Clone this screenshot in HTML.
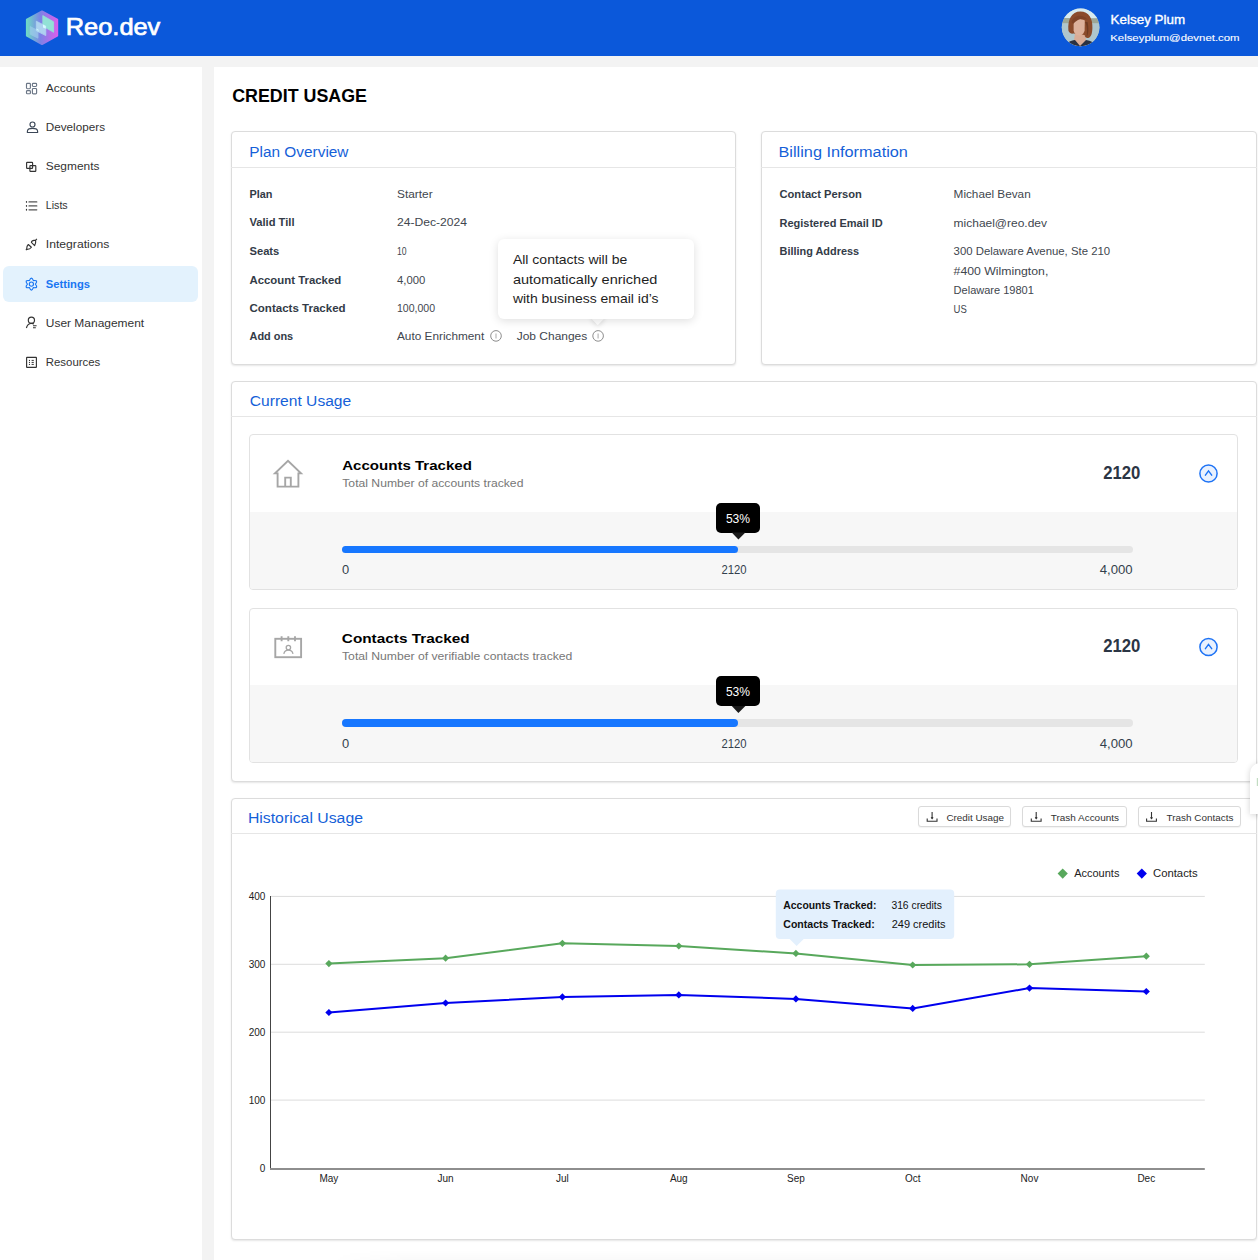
<!DOCTYPE html>
<html><head><meta charset="utf-8">
<style>
*{box-sizing:border-box;margin:0;padding:0}
html,body{width:1258px;height:1260px;overflow:hidden;background:#F3F3F3;font-family:"Liberation Sans",sans-serif}
.abs{position:absolute}
#hdr{left:0;top:0;width:1258px;height:56px;background:#0B58DA}
#side{left:0;top:66.5px;width:202px;height:1200px;background:#fff}
#main{left:213.5px;top:66.5px;width:1045px;height:1200px;background:#fff}
#sel{left:3px;top:266px;width:195px;height:35.5px;background:#E3F2FD;border-radius:6px}
.card{background:#fff;border-radius:4px;border:1px solid #DCDCDC;box-shadow:0 1px 2px rgba(0,0,0,.10)}
.sep{height:1px;background:#E6E6E6}
.inner{background:#fff;border:1px solid #E2E2E2;border-radius:4px;overflow:hidden}
.gray{background:#F7F7F7}
svg text{font-family:"Liberation Sans",sans-serif}
</style></head><body>
<div id="hdr" class="abs"></div>
<div id="side" class="abs"></div>
<div id="main" class="abs"></div>
<div id="sel" class="abs"></div>

<!-- Plan Overview -->
<div class="abs card" style="left:231px;top:131px;width:504.5px;height:233.5px"></div>
<div class="abs sep" style="left:231px;top:166.5px;width:504.5px"></div>
<!-- Billing -->
<div class="abs card" style="left:761px;top:131px;width:495.5px;height:233.5px"></div>
<div class="abs sep" style="left:761px;top:166.5px;width:495.5px"></div>
<!-- Current Usage -->
<div class="abs card" style="left:231px;top:381px;width:1025.5px;height:401px"></div>
<div class="abs sep" style="left:231px;top:416.2px;width:1025.5px"></div>
<div class="abs inner" style="left:249px;top:434px;width:989px;height:156px"><div class="abs gray" style="left:0;top:77px;width:100%;height:80px"></div></div>
<div class="abs inner" style="left:249px;top:608px;width:989px;height:155px"><div class="abs gray" style="left:0;top:76px;width:100%;height:80px"></div></div>
<!-- progress bars -->
<div class="abs" style="left:341.5px;top:545.8px;width:791.5px;height:7.3px;border-radius:4px;background:#E5E5E5"></div>
<div class="abs" style="left:341.5px;top:545.8px;width:396px;height:7.3px;border-radius:4px;background:#1777FF"></div>
<div class="abs" style="left:341.5px;top:719.3px;width:791.5px;height:7.3px;border-radius:4px;background:#E5E5E5"></div>
<div class="abs" style="left:341.5px;top:719.3px;width:396px;height:7.3px;border-radius:4px;background:#1777FF"></div>
<!-- Historical -->
<div class="abs card" style="left:231px;top:798px;width:1025.5px;height:442px"></div>
<div class="abs sep" style="left:231px;top:833.2px;width:1025.5px"></div>
<!-- buttons -->
<div class="abs" style="left:918.3px;top:806.4px;width:92.5px;height:20.8px;border:1px solid #DADADA;border-radius:3px;background:#fff;box-shadow:0 1px 1px rgba(0,0,0,.05)"></div>
<div class="abs" style="left:1022.3px;top:806.4px;width:104.3px;height:20.8px;border:1px solid #DADADA;border-radius:3px;background:#fff;box-shadow:0 1px 1px rgba(0,0,0,.05)"></div>
<div class="abs" style="left:1137.7px;top:806.4px;width:103.3px;height:20.8px;border:1px solid #DADADA;border-radius:3px;background:#fff;box-shadow:0 1px 1px rgba(0,0,0,.05)"></div>
<!-- plan tooltip -->
<div class="abs" style="left:592.95px;top:313.25px;width:9.5px;height:9.5px;background:#fff;transform:rotate(45deg);box-shadow:1px 1px 5px rgba(0,0,0,.13)"></div>
<div class="abs" style="left:498px;top:239px;width:196px;height:80px;background:#fff;border-radius:6px;box-shadow:0 2px 10px rgba(0,0,0,.13)"></div>
<!-- black 53% tooltips -->
<div class="abs" style="left:716px;top:502.7px;width:44px;height:30.2px;background:#000;border-radius:5px"></div>
<div class="abs" style="left:716px;top:676.2px;width:44px;height:30.2px;background:#000;border-radius:5px"></div>
<!-- chart tooltip -->

<!-- right-edge popup -->
<div class="abs" style="left:1249.7px;top:762.7px;width:40px;height:51px;background:#fff;border-radius:10px 0 0 0;box-shadow:0 1px 6px rgba(0,0,0,.18)"></div>

<svg class="abs" style="left:0;top:0" width="1258" height="1260" viewBox="0 0 1258 1260">
<defs>
 <linearGradient id="hexg" x1="0" x2="1" y1="0" y2="0">
  <stop offset="0" stop-color="#6FD8C6"/><stop offset="0.45" stop-color="#7C82E6"/><stop offset="1" stop-color="#D860EC"/>
 </linearGradient>
 <clipPath id="avc"><circle cx="1080.6" cy="27.4" r="18.8"/></clipPath>
</defs>
<!-- logo -->
<path d="M42 11.4 L57.2 19.6 L57.2 35.7 L42 44 L26.9 35.7 L26.9 19.6 Z" fill="url(#hexg)" stroke="url(#hexg)" stroke-width="2" stroke-linejoin="round"/>
<path d="M42.8 15.6 L53.6 21.8 L53.6 32.3 L42.8 26.1 Z" fill="#92E2D6" stroke="#92E2D6" stroke-width="0.8" stroke-linejoin="round"/>
<path d="M36.3 21.2 L45.8 26 L45.8 35.6 L36.3 30.8 Z" fill="#B2D9F1" stroke="#B2D9F1" stroke-width="0.8" stroke-linejoin="round" opacity="0.92"/>
<path d="M43 24.6 L45.8 26 L45.8 28.8 L43 27.4 Z" fill="#D4FBFF"/>
<path d="M36.3 28.6 L38.5 29.7 L38.5 32 L36.3 30.8 Z" fill="#D4FBFF"/>
<path d="M30.2 26.6 L38 30.6 L38 38.2 L30.2 34.2 Z" fill="#A3D0EE" stroke="#A3D0EE" stroke-width="0.8" stroke-linejoin="round" opacity="0.65"/>
<text x="65.8" y="35" font-size="23.4" fill="#fff" stroke="#fff" stroke-width="0.7" textLength="94.5" lengthAdjust="spacingAndGlyphs">Reo.dev</text>
<!-- avatar -->
<g clip-path="url(#avc)">
 <rect x="1060" y="8" width="42" height="40" fill="#B9CED4"/>
 <rect x="1060" y="8" width="42" height="10.5" fill="#D6EAF0"/>
 <path d="M1060 18.5 C1066 17.5 1072 18 1080 19 C1088 18 1095 17.8 1102 18.8 L1102 23.5 L1060 23.5 Z" fill="#9DA797"/>
 <rect x="1060" y="23.5" width="42" height="24" fill="#AFC6CD"/>
 <path d="M1075 33 L1085 33 L1087 48 L1073 48 Z" fill="#D9AC97"/>
 <path d="M1064 48 C1066 43 1070 40.5 1075 40 L1080 46 L1086 40 C1091 40.5 1095 43 1098 48 Z" fill="#2A3142"/>
 <path d="M1068.4 30.5 C1067.6 19.5 1071.5 11.4 1080.3 11.4 C1089 11.4 1092.8 18.5 1092.4 28 C1092.2 33.5 1091.2 37.6 1088 38 C1086 38.2 1084.8 37 1084.6 35 L1073.5 33.5 C1071.5 34 1068.8 33 1068.4 30.5 Z" fill="#8B4B2C"/>
 <path d="M1073.6 20 C1076 18.5 1081 18.5 1084.8 20.5 L1084.6 30.5 C1083.6 34.3 1081.2 35.6 1079.2 35.6 C1076.6 35.6 1074.2 34 1073.6 30.5 Z" fill="#DDB19C"/>
 <path d="M1071.5 22 C1073.5 15 1082.5 13.5 1087.5 19.5 C1083 17.8 1077.5 18.5 1073 24 Z" fill="#7E4328"/>
 <path d="M1085 22 C1087 25 1087.5 31 1086.5 37 C1088.5 35 1089 28 1087.5 22 Z" fill="#6E3A22"/>
</g>
<text x="1110.6" y="23.9" font-size="12.6" fill="#fff" stroke="#fff" stroke-width="0.35" textLength="74.6" lengthAdjust="spacingAndGlyphs">Kelsey Plum</text>
<text x="1110.2" y="40.9" font-size="9.8" fill="#fff" stroke="#fff" stroke-width="0.1" textLength="129.4" lengthAdjust="spacingAndGlyphs">Kelseyplum@devnet.com</text>
<!-- sidebar icons -->
<g fill="none" stroke="#6B7686" stroke-width="1.15">
 <rect x="26.5" y="83.3" width="3.9" height="5.4" rx="0.9"/>
 <rect x="32.4" y="83.3" width="4.2" height="3.2" rx="0.9"/>
 <rect x="26.5" y="90.6" width="3.9" height="3.2" rx="0.9"/>
 <rect x="32.4" y="88.5" width="4.2" height="5.4" rx="0.9"/>
</g>
<g fill="none" stroke="#3B4757" stroke-width="1.15">
 <circle cx="32.5" cy="124.5" r="2.5"/>
 <path d="M27.4 132.5 L27.4 131.2 C27.4 129.4 29.6 128.3 32.5 128.3 C35.4 128.3 37.6 129.4 37.6 131.2 L37.6 132.5 Z"/>
</g>
<g fill="none" stroke="#333" stroke-width="1.15">
 <rect x="26.6" y="162.3" width="6" height="6" rx="0.6"/>
 <rect x="29.9" y="165.6" width="5.9" height="5.7" rx="0.6"/>
 <path d="M31.4 242.4 C31.6 240.9 33.1 240.1 35.7 240.1 C35.9 242.6 35.3 244.6 34.6 245.6 Z M35.7 240.1 L36.9 238.9" stroke-linejoin="round"/>
 <path d="M28.3 244.5 C27 245.6 26.6 247.2 26.6 249.3 C28.6 249.4 30.5 248.6 31.4 247.2 Z M26.8 249.1 L25.9 250.2" stroke-linejoin="round"/>
 <circle cx="31.4" cy="320.3" r="3.1"/>
 <path d="M26.4 328 C27 325.6 28.5 323.9 30.6 323.5 C31.8 323.3 33 323.5 33.9 324"/>
 <path d="M33 325.8 H36.6 M33 327.8 H35.8" stroke-width="1.1"/>
 <rect x="26.6" y="357.4" width="9.8" height="9.9" rx="0.4"/>
 <path d="M31.6 360.4 H33.8 M31.6 362.4 H33.8 M31.6 364.4 H33.8" stroke-width="1"/>
</g>
<path d="M29 201.9 H36.8 M29 205.9 H36.8 M29 209.8 H36.8" stroke="#555" stroke-width="1.2" stroke-linecap="round"/>
<g fill="#333"><ellipse cx="26.5" cy="201.9" rx="0.65" ry="0.95"/><ellipse cx="26.5" cy="205.9" rx="0.65" ry="0.95"/><ellipse cx="26.5" cy="209.8" rx="0.65" ry="0.95"/>
<circle cx="29.5" cy="360.4" r="0.6"/><circle cx="29.5" cy="362.4" r="0.6"/><circle cx="29.5" cy="364.4" r="0.6"/></g>
<!-- settings gear -->
<g fill="none" stroke="#1976F2" stroke-width="1.15" stroke-linejoin="round">
 <path d="M29.40 280.64 Q31.40 275.56 33.40 280.64 Q38.79 279.83 35.40 284.10 Q38.79 288.37 33.40 287.56 Q31.40 292.64 29.40 287.56 Q24.01 288.37 27.40 284.10 Q24.01 279.83 29.40 280.64 Z"/>
 <circle cx="31.4" cy="284.1" r="2.1"/>
</g>
<!-- sidebar text -->
<g font-size="11" fill="#333">
 <text x="45.8" y="92" textLength="49.5" lengthAdjust="spacingAndGlyphs">Accounts</text>
 <text x="45.8" y="130.9" textLength="59.2" lengthAdjust="spacingAndGlyphs">Developers</text>
 <text x="45.8" y="170.1" textLength="53.6" lengthAdjust="spacingAndGlyphs">Segments</text>
 <text x="45.8" y="209.3" textLength="21.9" lengthAdjust="spacingAndGlyphs">Lists</text>
 <text x="45.8" y="248.3" textLength="63.6" lengthAdjust="spacingAndGlyphs">Integrations</text>
 <text x="45.8" y="287.6" font-weight="bold" fill="#1976F2" textLength="44.2" lengthAdjust="spacingAndGlyphs">Settings</text>
 <text x="45.8" y="326.8" textLength="98.4" lengthAdjust="spacingAndGlyphs">User Management</text>
 <text x="45.8" y="365.6" textLength="54.5" lengthAdjust="spacingAndGlyphs">Resources</text>
</g>
<text x="232.2" y="102" font-size="19" font-weight="bold" fill="#000" textLength="134.8" lengthAdjust="spacingAndGlyphs">CREDIT USAGE</text>
<!-- card titles -->
<g font-size="14" fill="#155FD8">
 <text x="249.3" y="156.5" textLength="99.2" lengthAdjust="spacingAndGlyphs">Plan Overview</text>
 <text x="778.5" y="157.3" textLength="129.4" lengthAdjust="spacingAndGlyphs">Billing Information</text>
 <text x="249.8" y="406.4" textLength="101.4" lengthAdjust="spacingAndGlyphs">Current Usage</text>
 <text x="247.9" y="823.3" textLength="115.1" lengthAdjust="spacingAndGlyphs">Historical Usage</text>
</g>
<!-- plan rows -->
<g font-size="10.8" font-weight="bold" fill="#333B47">
 <text x="249.5" y="198.1" textLength="23" lengthAdjust="spacingAndGlyphs">Plan</text>
 <text x="249.5" y="226.4" textLength="45" lengthAdjust="spacingAndGlyphs">Valid Till</text>
 <text x="249.5" y="254.8" textLength="29.8" lengthAdjust="spacingAndGlyphs">Seats</text>
 <text x="249.5" y="283.5" textLength="91.7" lengthAdjust="spacingAndGlyphs">Account Tracked</text>
 <text x="249.5" y="311.8" textLength="96.1" lengthAdjust="spacingAndGlyphs">Contacts Tracked</text>
 <text x="249.5" y="340.4" textLength="43.7" lengthAdjust="spacingAndGlyphs">Add ons</text>
 <text x="779.5" y="198.4" textLength="82.4" lengthAdjust="spacingAndGlyphs">Contact Person</text>
 <text x="779.5" y="226.8" textLength="103.3" lengthAdjust="spacingAndGlyphs">Registered Email ID</text>
 <text x="779.5" y="255.2" textLength="79.6" lengthAdjust="spacingAndGlyphs">Billing Address</text>
</g>
<g font-size="10.8" fill="#41464E">
 <text x="397" y="198.1" textLength="35.6" lengthAdjust="spacingAndGlyphs">Starter</text>
 <text x="397" y="226.4" textLength="70.1" lengthAdjust="spacingAndGlyphs">24-Dec-2024</text>
 <text x="397" y="254.8" textLength="9.6" lengthAdjust="spacingAndGlyphs">10</text>
 <text x="397" y="283.5" textLength="28.3" lengthAdjust="spacingAndGlyphs">4,000</text>
 <text x="397" y="311.8" textLength="38.1" lengthAdjust="spacingAndGlyphs">100,000</text>
 <text x="397" y="340.4" textLength="87.2" lengthAdjust="spacingAndGlyphs">Auto Enrichment</text>
 <text x="516.7" y="340.4" textLength="70.6" lengthAdjust="spacingAndGlyphs">Job Changes</text>
 <text x="953.6" y="198.4" textLength="77.1" lengthAdjust="spacingAndGlyphs">Michael Bevan</text>
 <text x="953.6" y="226.8" textLength="93.4" lengthAdjust="spacingAndGlyphs">michael@reo.dev</text>
 <text x="953.6" y="255.2" textLength="156.5" lengthAdjust="spacingAndGlyphs">300 Delaware Avenue, Ste 210</text>
 <text x="953.6" y="275" textLength="94.7" lengthAdjust="spacingAndGlyphs">#400 Wilmington,</text>
 <text x="953.6" y="294.4" textLength="80.3" lengthAdjust="spacingAndGlyphs">Delaware 19801</text>
 <text x="953.6" y="313" textLength="13.2" lengthAdjust="spacingAndGlyphs">US</text>
</g>
<g fill="none" stroke="#8C8C8C" stroke-width="1">
 <circle cx="496" cy="335.9" r="5.3"/><circle cx="598.1" cy="335.9" r="5.3"/>
</g>
<path d="M496 333.6 V338.6 M598.1 333.6 V338.6" stroke="#BDBDBD" stroke-width="1.3"/>
<!-- plan tooltip -->

<g font-size="13.5" fill="#1E1E1E">
 <text x="512.9" y="264.4" textLength="114.4" lengthAdjust="spacingAndGlyphs">All contacts will be</text>
 <text x="512.9" y="284" textLength="144.4" lengthAdjust="spacingAndGlyphs">automatically enriched</text>
 <text x="512.9" y="303.3" textLength="145.6" lengthAdjust="spacingAndGlyphs">with business email id’s</text>
</g>
<!-- inner cards -->
<g fill="none" stroke="#A6A6A6" stroke-width="1.9">
 <path d="M277.6 486.6 V473.4 H275 L288 460.8 L301 473.4 H298.4 V486.6 Z"/>
 <path d="M285.2 486.6 V477.6 H290.8 V486.6"/>
 <rect x="275.3" y="638.8" width="25.8" height="18.4"/>
 <path d="M281.6 636.3 V641.2 M288.3 636.3 V641.2 M295 636.3 V641.2"/>
 <circle cx="288.4" cy="647.6" r="2.2" stroke-width="1.3"/>
 <path d="M283.8 653.8 C284.5 651 286.2 650.2 288.4 650.2 C290.6 650.2 292.3 651 293 653.8" stroke-width="1.3"/>
</g>
<g font-size="13" font-weight="bold" fill="#000">
 <text x="342.2" y="469.8" textLength="129.7" lengthAdjust="spacingAndGlyphs">Accounts Tracked</text>
 <text x="341.8" y="643.2" textLength="127.9" lengthAdjust="spacingAndGlyphs">Contacts Tracked</text>
</g>
<g font-size="10.9" fill="#777">
 <text x="342.3" y="486.7" textLength="181.1" lengthAdjust="spacingAndGlyphs">Total Number of accounts tracked</text>
 <text x="342" y="660.2" textLength="230.4" lengthAdjust="spacingAndGlyphs">Total Number of verifiable contacts tracked</text>
</g>
<g font-size="17.5" font-weight="bold" fill="#2B3544">
 <text x="1103.2" y="478.5" textLength="37.2" lengthAdjust="spacingAndGlyphs">2120</text>
 <text x="1103.2" y="652" textLength="37.2" lengthAdjust="spacingAndGlyphs">2120</text>
</g>
<g fill="#E9F1FE" stroke="#1E73F5" stroke-width="1.5">
 <circle cx="1208.5" cy="473.5" r="8.6"/><circle cx="1208.5" cy="647" r="8.6"/>
</g>
<g fill="none" stroke="#1A73F5" stroke-width="1.4" stroke-linecap="round">
 <path d="M1205.4 475.2 L1208.5 470.9 L1211.7 475.2"/><path d="M1205.4 648.7 L1208.5 644.4 L1211.7 648.7"/>
</g>
<g fill="#1A1A1A"><path d="M731.8 532.6 H745.4 L738.4 539.6 Z"/><path d="M731.8 706.1 H745.4 L738.4 713.1 Z"/></g>
<g font-size="13" fill="#fff">
 <text x="725.9" y="522.5" textLength="24.2" lengthAdjust="spacingAndGlyphs">53%</text>
 <text x="725.9" y="696" textLength="24.2" lengthAdjust="spacingAndGlyphs">53%</text>
</g>
<g font-size="12" fill="#333F4C">
 <text x="342" y="574" textLength="7.2" lengthAdjust="spacingAndGlyphs">0</text>
 <text x="721.4" y="574" textLength="25.1" lengthAdjust="spacingAndGlyphs">2120</text>
 <text x="1099.7" y="574" textLength="32.9" lengthAdjust="spacingAndGlyphs">4,000</text>
 <text x="342" y="747.5" textLength="7.2" lengthAdjust="spacingAndGlyphs">0</text>
 <text x="721.4" y="747.5" textLength="25.1" lengthAdjust="spacingAndGlyphs">2120</text>
 <text x="1099.7" y="747.5" textLength="32.9" lengthAdjust="spacingAndGlyphs">4,000</text>
</g>
<!-- download buttons -->
<g fill="none" stroke="#333" stroke-width="1.1">
 <path d="M932.1 812 V818.6 M931.1 817.4 L932.1 818.6 L933.1 817.4 M927.2 818.4 V821.3 H937 V818.4"/>
 <path d="M1036.2 812 V818.6 M1035.2 817.4 L1036.2 818.6 L1037.2 817.4 M1031.3 818.4 V821.3 H1041.1 V818.4"/>
 <path d="M1151.5 812 V818.6 M1150.5 817.4 L1151.5 818.6 L1152.5 817.4 M1146.6 818.4 V821.3 H1156.4 V818.4"/>
</g>
<g font-size="9" fill="#333">
 <text x="946.4" y="820.5" textLength="57.5" lengthAdjust="spacingAndGlyphs">Credit Usage</text>
 <text x="1050.7" y="820.5" textLength="68.3" lengthAdjust="spacingAndGlyphs">Trash Accounts</text>
 <text x="1166.6" y="820.5" textLength="66.8" lengthAdjust="spacingAndGlyphs">Trash Contacts</text>
</g>
<!-- chart -->
<g stroke="#DCDCDC" stroke-width="1">
 <path d="M271 896.4 H1204.8"/>
 <path d="M271 964.3 H1204.8"/>
 <path d="M271 1032.2 H1204.8"/>
 <path d="M271 1100.1 H1204.8"/>
</g>
<path d="M270.5 896 V1169" stroke="#444" stroke-width="1"/>
<path d="M270 1169.1 H1204.8" stroke="#8E8E8E" stroke-width="2"/>
<g font-size="10" fill="#222" text-anchor="end">
 <text x="265.4" y="900.0">400</text>
 <text x="265.4" y="967.9">300</text>
 <text x="265.4" y="1035.8">200</text>
 <text x="265.4" y="1103.7">100</text>
 <text x="265.4" y="1171.6">0</text>
</g>
<g font-size="10" fill="#222" text-anchor="middle">
 <text x="328.9" y="1182.1">May</text>
 <text x="445.6" y="1182.1">Jun</text>
 <text x="562.4" y="1182.1">Jul</text>
 <text x="678.8" y="1182.1">Aug</text>
 <text x="795.9" y="1182.1">Sep</text>
 <text x="912.7" y="1182.1">Oct</text>
 <text x="1029.5" y="1182.1">Nov</text>
 <text x="1146.3" y="1182.1">Dec</text>
</g>
<polyline points="328.9,963.6 445.6,958.2 562.4,943.3 678.8,946.0 795.9,953.4 912.7,965.0 1029.5,964.3 1146.3,956.2" fill="none" stroke="#58A85C" stroke-width="2" stroke-linejoin="round"/><g fill="#58A85C"><path d="M328.9 960.0 L332.5 963.6 L328.9 967.2 L325.3 963.6 Z"/><path d="M445.6 954.6 L449.2 958.2 L445.6 961.8 L442.0 958.2 Z"/><path d="M562.4 939.7 L566.0 943.3 L562.4 946.9 L558.8 943.3 Z"/><path d="M678.8 942.4 L682.4 946.0 L678.8 949.6 L675.2 946.0 Z"/><path d="M795.9 949.8 L799.5 953.4 L795.9 957.0 L792.3 953.4 Z"/><path d="M912.7 961.4 L916.3 965.0 L912.7 968.6 L909.1 965.0 Z"/><path d="M1029.5 960.7 L1033.1 964.3 L1029.5 967.9 L1025.9 964.3 Z"/><path d="M1146.3 952.6 L1149.9 956.2 L1146.3 959.8 L1142.7 956.2 Z"/></g>
<polyline points="328.9,1012.5 445.6,1003.0 562.4,996.9 678.8,994.9 795.9,998.9 912.7,1008.4 1029.5,988.1 1146.3,991.5" fill="none" stroke="#0000EE" stroke-width="2" stroke-linejoin="round"/><g fill="#0000EE"><path d="M328.9 1008.9 L332.5 1012.5 L328.9 1016.1 L325.3 1012.5 Z"/><path d="M445.6 999.4 L449.2 1003.0 L445.6 1006.6 L442.0 1003.0 Z"/><path d="M562.4 993.3 L566.0 996.9 L562.4 1000.5 L558.8 996.9 Z"/><path d="M678.8 991.3 L682.4 994.9 L678.8 998.5 L675.2 994.9 Z"/><path d="M795.9 995.3 L799.5 998.9 L795.9 1002.5 L792.3 998.9 Z"/><path d="M912.7 1004.8 L916.3 1008.4 L912.7 1012.0 L909.1 1008.4 Z"/><path d="M1029.5 984.5 L1033.1 988.1 L1029.5 991.7 L1025.9 988.1 Z"/><path d="M1146.3 987.9 L1149.9 991.5 L1146.3 995.1 L1142.7 991.5 Z"/></g>
<path d="M1062.7 868.5 L1067.8 873.6 L1062.7 878.7 L1057.6 873.6 Z" fill="#58A85C"/>
<path d="M1141.8 868.5 L1146.9 873.6 L1141.8 878.7 L1136.7 873.6 Z" fill="#0000EE"/>
<g font-size="10" fill="#222">
 <text x="1074.2" y="877.2" textLength="45.2" lengthAdjust="spacingAndGlyphs">Accounts</text>
 <text x="1153" y="877.2" textLength="44.6" lengthAdjust="spacingAndGlyphs">Contacts</text>
</g>
<rect x="775.8" y="889.5" width="178.4" height="49.6" rx="4" fill="#E3F0FD"/>
<path d="M789.4 938.8 H804 L796.6 946 Z" fill="#E3F0FD"/>
<g font-size="10" fill="#111">
 <text x="783.3" y="908.6" font-weight="bold" textLength="93.1" lengthAdjust="spacingAndGlyphs">Accounts Tracked:</text>
 <text x="891.4" y="908.6" textLength="50.5" lengthAdjust="spacingAndGlyphs">316 credits</text>
 <text x="783.3" y="927.7" font-weight="bold" textLength="91.5" lengthAdjust="spacingAndGlyphs">Contacts Tracked:</text>
 <text x="891.7" y="927.7" textLength="53.8" lengthAdjust="spacingAndGlyphs">249 credits</text>
</g>
<rect x="1256.8" y="778" width="1.5" height="8" fill="#C2DCC2"/>
</svg>
<div class="abs" style="left:330px;top:1250px;width:928px;height:10px;background:linear-gradient(to bottom,rgba(0,0,0,0),rgba(0,0,0,0.02));-webkit-mask-image:linear-gradient(to right,transparent,#000 80px)"></div>
</body></html>
